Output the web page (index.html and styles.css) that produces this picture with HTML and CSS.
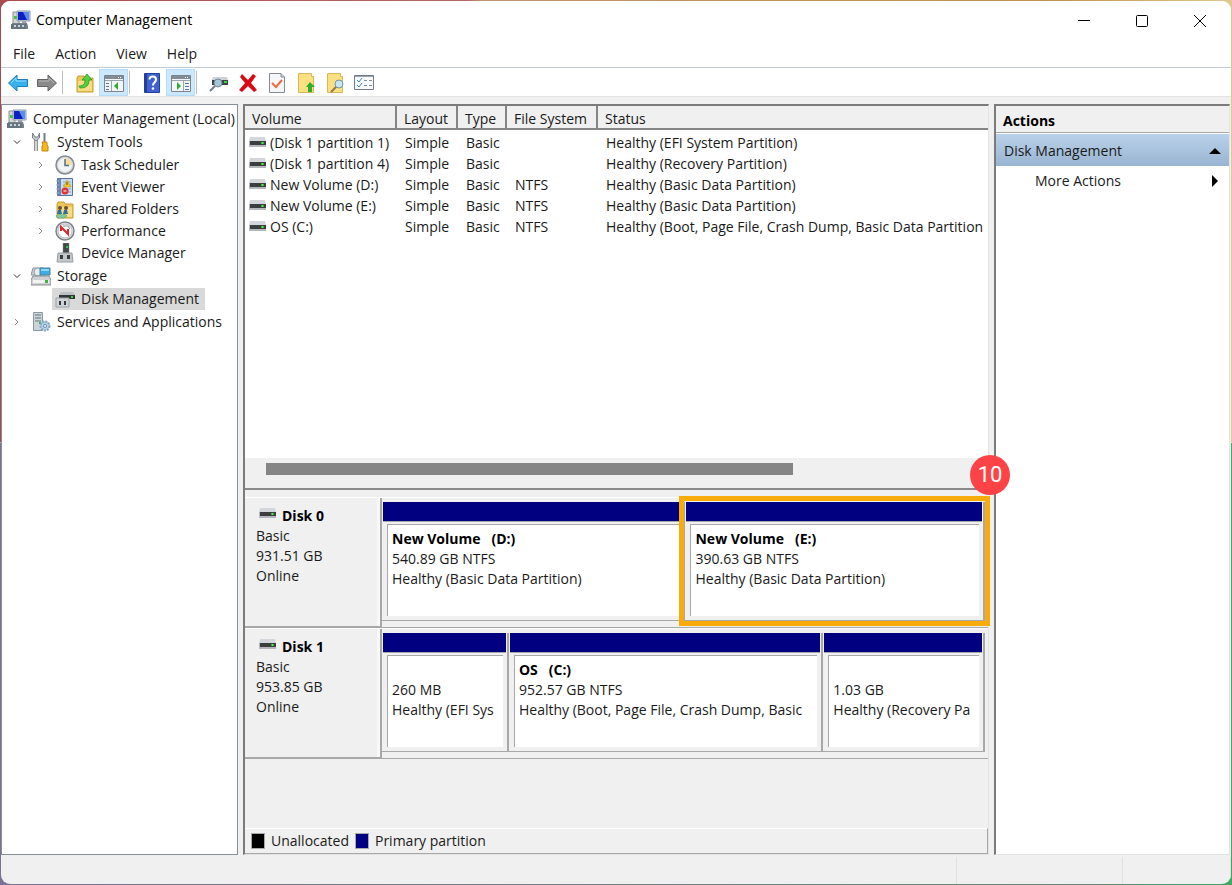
FILE: index.html
```html
<!DOCTYPE html>
<html lang="en">

<head>
    <meta charset="UTF-8">
    <title>Computer Management</title>
    <link rel="stylesheet" href="styles.css">
</head>

<body>
    <!-- shared icons -->
    <svg class="sprite" aria-hidden="true">
        <symbol id="disk" viewBox="0 0 17 12">
            <path d="M1 1h15l1 4H0z" fill="#d3d6da" />
            <path d="M0 5h17v6H0z" fill="#b4b8bc" />
            <path d="M1 5h16v4H1z" fill="#3b3d3f" />
            <path d="M12 6h3v2h-3z" fill="#2fb52f" />
            <path d="M13 6h1v2h-1z" fill="#4cf04c" />
        </symbol>
        <symbol id="computer" viewBox="0 0 20 20">
            <path d="M2 2h4l2 2v11H2z" fill="#d5d6cf" stroke="#8c8f90" />
            <path d="M3 6h3v3H3z" fill="#46b946" />
            <path d="M6 1h13v10H6z" fill="#c9d3e2" stroke="#8c9bb0" />
            <path d="M7 2h11v8H7z" fill="#0c20c0" />
            <path d="M12 2h6v8h-2z" fill="#5d8cf0" />
            <path d="M11 11h4l1 4h-5z" fill="#9ba3ac" />
            <path d="M1 13h15l1 3v3H1z" fill="#77838b" />
            <path d="M0 14h15v5H0z" fill="#66747e" />
            <path d="M3 15h2v2H3zM7 15h2v2H7zM11 15h2v2h-2z" fill="#cbd4da" />
        </symbol>
        <symbol id="folder" viewBox="0 0 20 20">
            <path d="M2 5l1-2h6l1 2h8v14H2z" fill="#edc657" stroke="#c99c35" />
            <path d="M3 8h14v10H3z" fill="#f7dc83" />
        </symbol>
    </svg>

    <div class="window">
        <header class="titlebar">
            <svg class="icon"><use href="#computer" /></svg>
            <h1>Computer Management</h1>
            <div class="caption-buttons">
                <button type="button" aria-label="Minimize"><svg viewBox="0 0 14 14"><path d="M1 6.500h12" /></svg></button>
                <button type="button" aria-label="Maximize"><svg viewBox="0 0 14 14"><rect x="1.500" y="1.500" width="11" height="11" rx="1" /></svg></button>
                <button type="button" aria-label="Close"><svg viewBox="0 0 14 14"><path d="M1 1l12 12M13 1L1 13" /></svg></button>
            </div>
        </header>

        <nav class="menubar">
            <button type="button">File</button>
            <button type="button">Action</button>
            <button type="button">View</button>
            <button type="button">Help</button>
        </nav>

        <div class="toolbar">
            <button type="button" aria-label="Back"><svg class="icon" viewBox="0 0 20 20"><path d="M9 2v4.500h10.500v7H9V18L.5 10z" fill="#37b1ee" stroke="#1c7fb9" /><path d="M3 10l5-5v3h10" fill="none" stroke="#8fdcff" /></svg></button>
            <button type="button" aria-label="Forward"><svg class="icon" viewBox="0 0 20 20"><path d="M11 2v4.500H.5v7H11V18l8.500-8z" fill="#8b8b8b" stroke="#636363" /><path d="M2 8h10V5l5 5" fill="none" stroke="#b5b5b5" /></svg></button>
            <span class="separator"></span>
            <button type="button" aria-label="Up one level"><svg class="icon" viewBox="0 0 20 20"><use href="#folder" /><path d="M4 13c5 0 6-3 6-6H7l5-6 5 6h-3c0 6-3 8-9 8z" fill="#4fd03c" stroke="#27932a" stroke-width=".7" /></svg></button>
            <button type="button" class="on" aria-label="Show or hide console tree"><svg class="icon" viewBox="0 0 20 20"><path d="M.5 2.500h19v16H.5z" fill="#f4f5f6" stroke="#7b858e" /><path d="M1 3h18v3H1z" fill="#818c96" /><path d="M14 4h1v1h-1zM16 4h1v1h-1z" fill="#fff" /><path d="M1 7.500h18M7.500 8v10" stroke="#9aa4ac" /><path d="M2 10.500h3M2 13.500h3M2 16.500h3" stroke="#4a78a8" /><path d="M14 9v8l-4-4z" fill="#2daf2d" /></svg></button>
            <span class="separator"></span>
            <button type="button" aria-label="Help topics"><svg class="icon" viewBox="0 0 20 20"><path d="M2.500.5h15v19h-15z" fill="#3e62cf" stroke="#233f99" /><path d="M3 1h2v18H3z" fill="#233f99" /><path d="M7.500 6.500c0-4 6.500-4 6.500 0 0 2.500-3 3-3 6" fill="none" stroke="#fff" stroke-width="2" /><circle cx="11" cy="15.500" r="1.300" fill="#fff" /></svg></button>
            <button type="button" class="on" aria-label="Show or hide action pane"><svg class="icon" viewBox="0 0 20 20"><path d="M.5 2.500h19v16H.5z" fill="#f4f5f6" stroke="#7b858e" /><path d="M1 3h18v3H1z" fill="#818c96" /><path d="M14 4h1v1h-1zM16 4h1v1h-1z" fill="#fff" /><path d="M1 7.500h18M12.500 8v10" stroke="#9aa4ac" /><path d="M14 10.500h4M14 13.500h4M14 16.500h4" stroke="#4a78a8" /><path d="M6 9v8l4-4z" fill="#2daf2d" /></svg></button>
            <span class="separator"></span>
            <button type="button" aria-label="Rescan disks"><svg class="icon" viewBox="0 0 20 20"><path d="M4 4h14l1 3H3z" fill="#cfd3d7" /><path d="M3 7h16v5H3z" fill="#3d4244" /><path d="M15 8h3v2h-3z" fill="#38d948" /><circle cx="9" cy="10" r="4" fill="#a5c6d8" stroke="#778894" /><path d="M6 13l-5 5" stroke="#717e88" stroke-width="2" /></svg></button>
            <button type="button" aria-label="Delete"><svg class="icon" viewBox="0 0 20 20"><path d="M4 1l6 6 5-6 3 2-5 7 6 7-3 2-6-6-6 6-3-2 6-7-5-6z" fill="#d90a12" /></svg></button>
            <button type="button" aria-label="Properties"><svg class="icon" viewBox="0 0 20 20"><path d="M2.500.5H14L17.500 4v15.500h-15z" fill="#f5f6f8" stroke="#858a93" /><path d="M14 .5V4h3.500" fill="#ccd3da" stroke="#858a93" /><path d="M5 10l4 4 6-7" fill="none" stroke="#ee6840" stroke-width="2" /></svg></button>
            <button type="button" aria-label="Extend volume"><svg class="icon" viewBox="0 0 20 20"><path d="M2.500.5h13v3h2v16h-15z" fill="#fae080" stroke="#dab65a" /><path d="M10 14l4-5 5 5h-3v5h-4v-5z" fill="#2fad2c" /></svg></button>
            <button type="button" aria-label="Explore volume"><svg class="icon" viewBox="0 0 20 20"><path d="M2.500.5h13v3h2v16h-15z" fill="#fae080" stroke="#dab65a" /><circle cx="14" cy="11" r="4" fill="#c9e6f4" stroke="#7593a3" /><path d="M11 14l-5 5" stroke="#8b7a55" stroke-width="2" /></svg></button>
            <button type="button" aria-label="Settings list"><svg class="icon" viewBox="0 0 20 20"><path d="M.5 2.500h19v14H.5z" fill="#f8f9fa" stroke="#737c84" /><path d="M1 3.500h18" stroke="#9aa2a9" /><path d="M3 7l2 2 3-4M3 12l2 2 3-4" fill="none" stroke="#2e94d4" /><path d="M10 7.500h3M15 7.500h3M10 12.500h3M15 12.500h3" stroke="#858c92" /></svg></button>
        </div>

        <main class="content">
            <aside class="tree panel-thin">
                <ul>
                    <li>
                        <a href="#" class="root"><svg class="icon"><use href="#computer" /></svg><span>Computer Management (Local)</span></a>
                        <ul>
                            <li>
                                <a href="#"><svg class="chevron" viewBox="0 0 8 8"><path class="open" d="M1 2.500l3 3 3-3" /></svg><svg class="icon" viewBox="0 0 20 20"><path d="M5 8v11" stroke="#8d949a" stroke-width="4" /><path d="M5 8v11" stroke="#d3d7da" stroke-width="2" /><path d="M1.500 1v5l3.500 3 3.500-3V1L7 5H4z" fill="#c5cbcf" stroke="#7b8287" /><path d="M13.500 1v9" stroke="#777f86" stroke-width="2" /><path d="M11 10h5v3l1 1v5h-6v-5l1-1z" fill="#f6b81c" stroke="#c38a12" /></svg><span>System Tools</span></a>
                                <ul>
                                    <li><a href="#"><svg class="chevron" viewBox="0 0 8 8"><path d="M2 1l3 3-3 3" /></svg><svg class="icon" viewBox="0 0 20 20"><circle cx="10" cy="10" r="9" fill="#d3d7da" stroke="#858b91" stroke-width="1.500" /><circle cx="10" cy="10" r="7" fill="#f1f3f5" /><path d="M10 3a7 7 0 0 1 7 7h-7z" fill="#f8dc9b" /><path d="M10 4v6.500h4" fill="none" stroke="#56708a" stroke-width="1.500" /></svg><span>Task Scheduler</span></a></li>
                                    <li><a href="#"><svg class="chevron" viewBox="0 0 8 8"><path d="M2 1l3 3-3 3" /></svg><svg class="icon" viewBox="0 0 20 20"><path d="M2.500 1.500h15v17h-15z" fill="#c9daf1" stroke="#5570a3" /><path d="M3 2h3v16H3z" fill="#6f87b5" /><path d="M1 4h3M1 8h3M1 12h3M1 16h3" stroke="#aab5c8" /><path d="M8 5h8M8 8h8M8 12h8M8 15h8" stroke="#8da9d2" /><path d="M12 3l4 7H8.500z" fill="#f7cb1c" stroke="#bd9209" stroke-width=".5" /><path d="M12 5v3" stroke="#59490e" /><circle cx="10" cy="14" r="3.500" fill="#db3539" /><path d="M8.500 14h3" stroke="#fff" /></svg><span>Event Viewer</span></a></li>
                                    <li><a href="#"><svg class="chevron" viewBox="0 0 8 8"><path d="M2 1l3 3-3 3" /></svg><svg class="icon" viewBox="0 0 20 20"><use href="#folder" /><circle cx="5" cy="9" r="2" fill="#684d37" /><circle cx="11" cy="9" r="2" fill="#684d37" /><path d="M2 15l1-4h3l1 4zM8 15l1-4h3l1 4z" fill="#2c719f" /><path d="M1 17l3-2 3 1 3-1 2 2-3 2H3z" fill="#81caa3" stroke="#42926a" stroke-width=".5" /></svg><span>Shared Folders</span></a></li>
                                    <li><a href="#"><svg class="chevron" viewBox="0 0 8 8"><path d="M2 1l3 3-3 3" /></svg><svg class="icon" viewBox="0 0 20 20"><circle cx="10" cy="10" r="9" fill="#e2e4e6" stroke="#7e8387" stroke-width="1.500" /><circle cx="10" cy="10" r="7" fill="#fff" stroke="#b8bcc0" /><path d="M6 10V6l7 7V8" fill="none" stroke="#dc262c" stroke-width="2" /><path d="M8 5h5l2 3" fill="none" stroke="#8d9398" /></svg><span>Performance</span></a></li>
                                    <li><a href="#"><span class="chevron"></span><svg class="icon" viewBox="0 0 20 20"><path d="M8 0h6v10H8z" fill="#44484b" stroke="#888" stroke-width=".5" /><path d="M11 3h2v2h-2z" fill="#35c63d" /><path d="M3 10h14l1 9H2z" fill="#c3c7ca" stroke="#989ea3" /><path d="M5 12h3v4H5zM12 12h3v4h-3z" fill="#383d41" /></svg><span>Device Manager</span></a></li>
                                </ul>
                            </li>
                            <li>
                                <a href="#"><svg class="chevron" viewBox="0 0 8 8"><path class="open" d="M1 2.500l3 3 3-3" /></svg><svg class="icon" viewBox="0 0 20 20"><path d="M2 2h10l3 7H0z" fill="#cbd0d3" stroke="#8c9499" /><circle cx="7" cy="6" r="4" fill="#e8edf0" stroke="#94a1aa" /><path d="M9 2h10v7H9z" fill="#3fade1" stroke="#477fa0" /><path d="M10 3h8v2h-8z" fill="#8fd8f5" /><path d="M2 10h16l2 4v5H0v-5z" fill="#cfd2d4" stroke="#888f94" /><path d="M2 14h16v3H2z" fill="#f3f3f3" /><path d="M14 14h3v3h-3z" fill="#3fb53e" /></svg><span>Storage</span></a>
                                <ul>
                                    <li><a href="#" class="selected"><svg class="icon" viewBox="0 0 20 20"><path d="M6 3h12l2 3H4z" fill="#bbc0c4" /><path d="M4 6h16v4H4z" fill="#333638" /><path d="M16 7h2v2h-2z" fill="#36d747" /><path d="M1 9h13v9H1z" fill="#d1d4d7" stroke="#9ba1a6" /><path d="M4 12h2v4H4zM9 12h2v4H9z" fill="#34393d" /></svg><span>Disk Management</span></a></li>
                                </ul>
                            </li>
                            <li>
                                <a href="#"><svg class="chevron" viewBox="0 0 8 8"><path d="M2 1l3 3-3 3" /></svg><svg class="icon" viewBox="0 0 20 20"><path d="M2.500.5h9v18h-9z" fill="#cdd4d8" stroke="#8b979f" /><path d="M4 3h6M4 6h6M4 9h6" stroke="#5e7482" /><path d="M8 10h2v2H8z" fill="#3cb75e" /><circle cx="14" cy="14" r="4.500" fill="#b6d0e4" stroke="#7fa5c4" stroke-width="2" stroke-dasharray="2 1" /><circle cx="14" cy="14" r="1.500" fill="#fff" stroke="#658eae" /></svg><span>Services and Applications</span></a>
                            </li>
                        </ul>
                    </li>
                </ul>
            </aside>

            <section class="center panel">
                <div class="volumes">
                    <div class="volume-scroll">
                        <table>
                            <colgroup>
                                <col class="col-volume">
                                <col class="col-layout">
                                <col class="col-type">
                                <col class="col-fs">
                                <col>
                            </colgroup>
                            <thead>
                                <tr>
                                    <th>Volume</th>
                                    <th>Layout</th>
                                    <th>Type</th>
                                    <th>File System</th>
                                    <th>Status</th>
                                </tr>
                            </thead>
                            <tbody>
                                <tr>
                                    <td><svg class="disk-icon"><use href="#disk" /></svg>(Disk 1 partition 1)</td>
                                    <td>Simple</td>
                                    <td>Basic</td>
                                    <td></td>
                                    <td>Healthy (EFI System Partition)</td>
                                </tr>
                                <tr>
                                    <td><svg class="disk-icon"><use href="#disk" /></svg>(Disk 1 partition 4)</td>
                                    <td>Simple</td>
                                    <td>Basic</td>
                                    <td></td>
                                    <td>Healthy (Recovery Partition)</td>
                                </tr>
                                <tr>
                                    <td><svg class="disk-icon"><use href="#disk" /></svg>New Volume (D:)</td>
                                    <td>Simple</td>
                                    <td>Basic</td>
                                    <td>NTFS</td>
                                    <td>Healthy (Basic Data Partition)</td>
                                </tr>
                                <tr>
                                    <td><svg class="disk-icon"><use href="#disk" /></svg>New Volume (E:)</td>
                                    <td>Simple</td>
                                    <td>Basic</td>
                                    <td>NTFS</td>
                                    <td>Healthy (Basic Data Partition)</td>
                                </tr>
                                <tr>
                                    <td><svg class="disk-icon"><use href="#disk" /></svg>OS (C:)</td>
                                    <td>Simple</td>
                                    <td>Basic</td>
                                    <td>NTFS</td>
                                    <td>Healthy (Boot, Page File, Crash Dump, Basic Data Partition</td>
                                </tr>
                            </tbody>
                        </table>
                    </div>
                    <div class="scrollbar">
                        <div class="thumb"></div>
                    </div>
                </div>

                <div class="graph">
                    <div class="disk">
                        <div class="disk-label">
                            <h2><svg class="disk-icon"><use href="#disk" /></svg>Disk 0</h2>
                            <p>Basic</p>
                            <p>931.51 GB</p>
                            <p>Online</p>
                        </div>
                        <div class="partitions">
                            <div class="partition" style="flex-grow: 303">
                                <div class="bar"></div>
                                <div class="box">
                                    <h3>New Volume &nbsp;&nbsp;(D:)</h3>
                                    <p>540.89 GB NTFS</p>
                                    <p>Healthy (Basic Data Partition)</p>
                                </div>
                            </div>
                            <div class="partition marked" style="flex-grow: 299">
                                <div class="bar"></div>
                                <div class="box">
                                    <h3>New Volume &nbsp;&nbsp;(E:)</h3>
                                    <p>390.63 GB NTFS</p>
                                    <p>Healthy (Basic Data Partition)</p>
                                </div>
                                <span class="badge">10</span>
                            </div>
                        </div>
                    </div>
                    <div class="disk">
                        <div class="disk-label">
                            <h2><svg class="disk-icon"><use href="#disk" /></svg>Disk 1</h2>
                            <p>Basic</p>
                            <p>953.85 GB</p>
                            <p>Online</p>
                        </div>
                        <div class="partitions">
                            <div class="partition" style="flex-grow: 126">
                                <div class="bar"></div>
                                <div class="box">
                                    <h3></h3>
                                    <p>260 MB</p>
                                    <p>Healthy (EFI Sys</p>
                                </div>
                            </div>
                            <div class="partition" style="flex-grow: 315">
                                <div class="bar"></div>
                                <div class="box">
                                    <h3>OS &nbsp;&nbsp;(C:)</h3>
                                    <p>952.57 GB NTFS</p>
                                    <p>Healthy (Boot, Page File, Crash Dump, Basic</p>
                                </div>
                            </div>
                            <div class="partition" style="flex-grow: 161">
                                <div class="bar"></div>
                                <div class="box">
                                    <h3></h3>
                                    <p>1.03 GB</p>
                                    <p>Healthy (Recovery Pa</p>
                                </div>
                            </div>
                        </div>
                    </div>
                    <div class="legend">
                        <span class="swatch unallocated"></span>Unallocated
                        <span class="swatch primary"></span>Primary partition
                    </div>
                </div>
            </section>

            <aside class="actions panel">
                <h2>Actions</h2>
                <button type="button" class="group">Disk Management<svg viewBox="0 0 12 12"><path d="M0 9l6-6 6 6z" /></svg></button>
                <button type="button" class="more">More Actions<svg viewBox="0 0 12 12"><path d="M3 0l6 6-6 6z" /></svg></button>
            </aside>
        </main>

        <footer class="statusbar">
            <span></span>
            <span></span>
            <span></span>
        </footer>
    </div>
</body>

</html>
```
FILE: styles.css
```css
* {
    box-sizing: border-box;
    margin: 0;
    padding: 0;
}

/* desktop colours show round the window edge */
body {
    height: 100vh;
    padding: 1px;
    background:
        linear-gradient(90deg, #a94a4e, #b5686a 38%, #c09470 39%, #bd9448 85%, #e0c890) top / 100% 50% no-repeat,
        linear-gradient(90deg, #7a7098, #6b7f88 40%, #5f8a70 90%, #3fa862) bottom / 100% 50% no-repeat;
    font: 14px/20px "Open Sans", "Noto Sans", sans-serif;
    color: #1a1a1a;
}

button {
    border: 0;
    background: none;
    font: inherit;
    color: inherit;
}

a {
    color: inherit;
    text-decoration: none;
}

ul {
    list-style: none;
}

.sprite {
    position: absolute;
    width: 0;
    height: 0;
}

.icon {
    flex: none;
    width: 20px;
    height: 20px;
}

.window {
    display: flex;
    flex-direction: column;
    height: 100%;
    border-radius: 9px;
    background: #f0f0f0;
    overflow: hidden;
}

/* title bar and menu */
.titlebar {
    display: flex;
    align-items: center;
    height: 37px;
    padding: 0 2px 0 10px;
    background: #fff;
}

.titlebar h1 {
    margin-left: 5px;
    font-size: 14px;
    font-weight: normal;
    color: #000;
}

.caption-buttons {
    display: flex;
    margin-left: auto;
}

.caption-buttons button {
    width: 58px;
    height: 36px;
}

.caption-buttons svg {
    width: 14px;
    height: 14px;
    vertical-align: middle;
    fill: none;
    stroke: #000;
}

.menubar {
    display: flex;
    height: 30px;
    padding: 2px 0 0 2px;
    border-bottom: 1px solid #c3ccd4;
    background: #fff;
}

.menubar button {
    padding: 0 10px;
}

.toolbar {
    display: flex;
    height: 29px;
    padding: 1px 0 0 2px;
    border-bottom: 1px solid #e3e3e3;
    background: #fff;
}

.toolbar button {
    display: flex;
    align-items: center;
    justify-content: center;
    width: 29px;
}

.toolbar .on {
    background: #cce8ff;
    border: 1px solid #b5dcfb;
}

.separator {
    width: 1px;
    margin: 2px 7px 2px 1px;
    background: #bcbcbc;
}

/* the three panes */
.content {
    display: grid;
    grid-template-columns: 237px minmax(0, 1fr) 236px;
    column-gap: 5px;
    flex: 1;
    min-height: 0;
    padding: 7px 1px 0 0;
}

.panel {
    border-style: solid;
    border-width: 2px 1px 1px 2px;
    border-color: #7b7b7b #e3e3e3 #e3e3e3 #7b7b7b;
}

.panel-thin {
    border: 1px solid #868e99;
    background: #fff;
}

/* tree */
.tree {
    padding: 3px 0;
    white-space: nowrap;
}

.tree ul ul {
    padding: 1px 0;
}

.tree a {
    display: flex;
    align-items: center;
    height: 22px;
}

.tree a span:last-child {
    margin-left: 6px;
}

.tree .root {
    padding-left: 5px;
}

.tree ul ul a {
    padding-left: 11px;
}

.tree ul ul ul a {
    padding-left: 35px;
}

.tree ul ul ul .selected {
    width: 153px;
    margin-left: 50px;
    padding-left: 3px;
    background: #d9d9d9;
}

.chevron {
    width: 8px;
    height: 8px;
    margin-right: 10px;
    fill: none;
    stroke: #8b8b8b;
}

.chevron .open {
    stroke: #333;
}

/* volume list */
.center {
    display: flex;
    flex-direction: column;
    min-height: 0;
}

.volumes {
    display: flex;
    flex-direction: column;
    flex: 1;
    border-bottom: 2px solid #8a8a8a;
}

.volume-scroll {
    flex: 1;
    background: #fff;
    overflow: hidden;
}

table {
    width: 100%;
    table-layout: fixed;
    border-collapse: separate;
    border-spacing: 0;
    white-space: nowrap;
}

.col-volume {
    width: 152px;
}

.col-layout {
    width: 61px;
}

.col-type {
    width: 49px;
}

.col-fs {
    width: 91px;
}

th {
    height: 24px;
    padding: 4px 0 0 7px;
    border-right: 2px solid #858585;
    border-bottom: 2px solid #858585;
    background: #f0f0f0;
    font-weight: normal;
    line-height: 18px;
    text-align: left;
}

th:last-child {
    border-right: 0;
}

td {
    height: 21px;
    padding-left: 8px;
    overflow: hidden;
}

td:first-child {
    padding-left: 4px;
}

tbody tr:first-child td {
    height: 23px;
    padding-top: 2px;
}

.disk-icon {
    width: 17px;
    height: 12px;
    margin-right: 4px;
    vertical-align: 0;
}

.scrollbar {
    height: 30px;
    padding: 5px 0 0 21px;
}

.thumb {
    width: 73%;
    height: 12px;
    background: #858585;
}

/* graphical view */
.graph {
    display: flex;
    flex-direction: column;
    height: 364px;
    padding-top: 7px;
}

.disk {
    display: flex;
    height: 131px;
    border-top: 1px solid #fff;
}

.disk-label {
    width: 137px;
    padding: 8px 11px;
    border-right: 2px solid #a8a8a8;
    border-bottom: 2px solid #a8a8a8;
    box-shadow: inset -3px 0 #f8f8f8;
}

.disk-label h2 {
    font-size: 14px;
    color: #000;
}

.disk-label .disk-icon {
    margin: 0 6px 0 3px;
    vertical-align: 2px;
}

.partitions {
    display: flex;
    flex: 1;
    min-width: 0;
    padding: 4px 3px 6px 0;
    border-bottom: 1px solid #a8a8a8;
}

.partition {
    display: flex;
    flex-direction: column;
    flex-basis: 0;
    min-width: 0;
    position: relative;
    border-right: 2px solid #a8a8a8;
    border-bottom: 1px solid #a8a8a8;
}

.bar {
    height: 20px;
    margin: 0 1px;
    border-bottom: 1px solid #a8a8a8;
    background: #000080;
}

.box {
    flex: 1;
    margin: 2px 4px 4px 5px;
    padding: 4px;
    border-top: 1px solid #a8a8a8;
    border-left: 1px solid #a8a8a8;
    background: #fff;
    white-space: nowrap;
}

.box h3 {
    height: 20px;
    font-size: 14px;
    color: #000;
}

.box p {
    overflow: hidden;
}

/* orange frame round the chosen partition */
.marked::after {
    content: "";
    position: absolute;
    inset: -6px -7px -6px -6px;
    border: 5px solid #f9ab0a;
}

.badge {
    position: absolute;
    top: -47px;
    right: -27px;
    z-index: 1;
    width: 40px;
    height: 40px;
    border-radius: 50%;
    background: #fd4345;
    font: 22px/40px Roboto, sans-serif;
    color: #fff;
    text-align: center;
}

.legend {
    display: flex;
    align-items: center;
    height: 26px;
    margin-top: auto;
    padding-left: 6px;
    border-top: 1px solid #fff;
    border-right: 1px solid #a8a8a8;
    border-bottom: 1px solid #a8a8a8;
}

.swatch {
    width: 14px;
    height: 16px;
    margin-right: 6px;
    border: 1px solid #a8a8a8;
}

.unallocated {
    background: #000;
}

.primary {
    margin-left: 6px;
    background: #000080;
}

/* actions */
.actions {
    display: flex;
    flex-direction: column;
    background: #fff;
}

.actions h2 {
    height: 27px;
    padding-left: 7px;
    border-bottom: 1px solid #a8a8a8;
    background: #f0f0f0;
    font-size: 14px;
    line-height: 30px;
    color: #000;
}

.actions button {
    display: flex;
    align-items: center;
    justify-content: space-between;
    height: 30px;
}

.actions .group {
    height: 32px;
    margin-top: 1px;
    padding: 1px 8px 0;
    background: linear-gradient(#bad1ea, #99b4d1);
}

.actions .more {
    padding: 0 8px 0 39px;
}

.actions svg {
    width: 12px;
    height: 12px;
}

.statusbar {
    display: flex;
    height: 29px;
    padding-top: 2px;
}

.statusbar span {
    width: 108px;
    border-right: 1px solid #e0e0e0;
}

.statusbar span:first-child {
    flex: 1;
}

.statusbar span:nth-child(2) {
    width: 166px;
}
```
